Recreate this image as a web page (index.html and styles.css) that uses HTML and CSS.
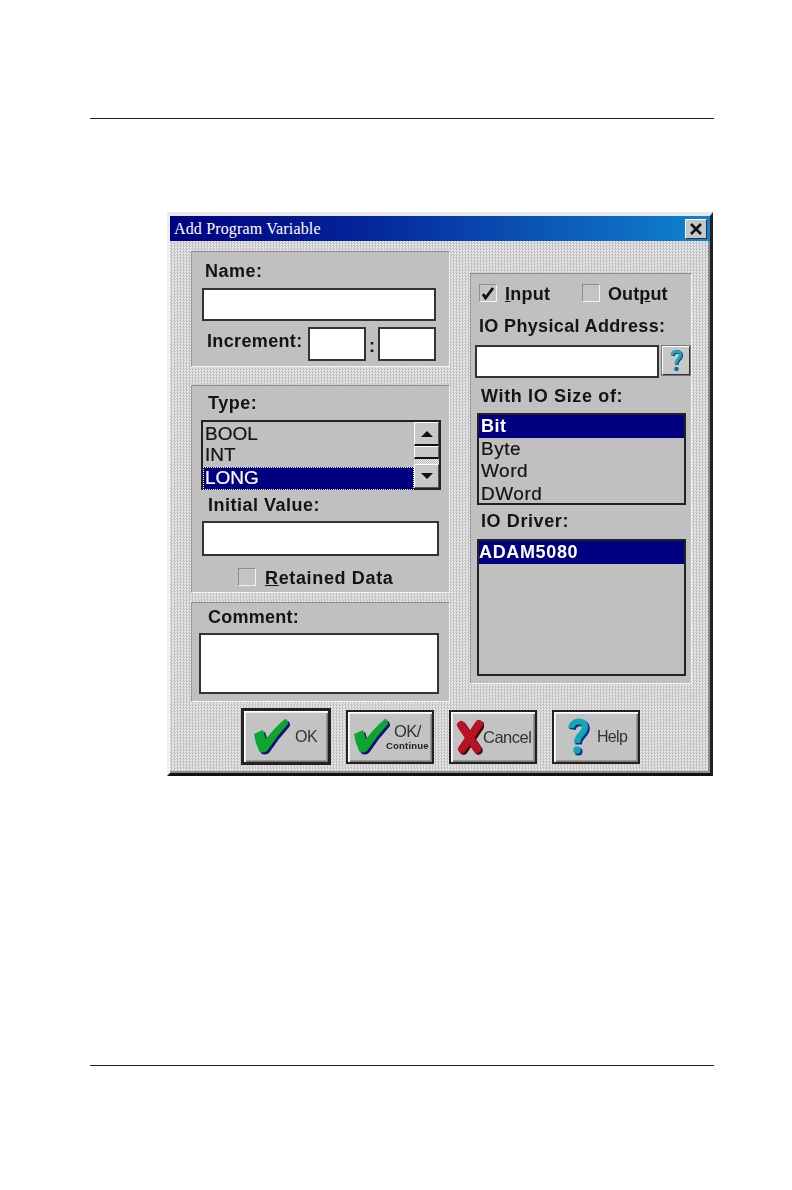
FILE: index.html
```html
<!DOCTYPE html>
<html lang="en">
<head>
<meta charset="utf-8">
<title>Add Program Variable</title>
<link rel="stylesheet" href="styles.css">
</head>
<body>
<div class="page">
  <hr class="rule rule-top">
  <section class="dialog">
    <header class="titlebar">
      <span class="title">Add Program Variable</span>
      <span class="close"><svg width="14" height="12" viewBox="0 0 14 12"><path d="M2 1 L12 11 M12 1 L2 11" stroke="#111" stroke-width="2.6" fill="none"/></svg></span>
    </header>
    <div class="main">
      <div class="left">
        <div class="panel panel-name">
          <div class="label label-name">Name:</div>
          <div class="field field-name"></div>
          <div class="inc-row">
            <span class="label">Increment:</span>
            <span class="field field-inc"></span>
            <span class="label colon">:</span>
            <span class="field field-inc"></span>
          </div>
        </div>
        <div class="panel panel-type">
          <div class="label label-type">Type:</div>
          <div class="listbox">
            <div class="rows">
              <div class="row row-first">BOOL</div>
              <div class="row">INT</div>
              <div class="row row-focus">LONG</div>
            </div>
            <div class="scroll">
              <span class="sbtn sbtn-up"><i class="arrow-up"></i></span>
              <span class="thumb"></span>
              <span class="track"></span>
              <span class="sbtn sbtn-down"><i class="arrow-down"></i></span>
            </div>
          </div>
          <div class="label label-init">Initial Value:</div>
          <div class="field field-init"></div>
          <div class="retain">
            <span class="check"></span>
            <span class="label"><u>R</u>etained Data</span>
          </div>
        </div>
        <div class="panel panel-comment">
          <div class="label label-comment">Comment:</div>
          <div class="field field-comment"></div>
        </div>
      </div>
      <div class="panel right">
        <div class="io-row">
          <span class="check"><svg width="14" height="14" viewBox="0 0 14 14"><path d="M2 8 L4.500 12 L12 2" stroke="#111" stroke-width="2.800" fill="none"/></svg></span>
          <span class="label io-input"><u>I</u>nput</span>
          <span class="check check-out"></span>
          <span class="label io-output">Out<u>p</u>ut</span>
        </div>
        <div class="label label-addr">IO Physical Address:</div>
        <div class="addr-row">
          <span class="field field-addr"></span>
          <span class="qbtn"><svg width="14" height="24" viewBox="0 0 14 24"><path d="M3 6 C4 1 12 1 11.500 6 C11 10 7 10 7 15" stroke="#0b3f78" stroke-width="3.500" fill="none" transform="translate(.8 .8)"/><path d="M3 6 C4 1 12 1 11.500 6 C11 10 7 10 7 15" stroke="#1fa6b8" stroke-width="3" fill="none"/><circle cx="7.500" cy="20" r="2.300" fill="#1b6f98"/></svg></span>
        </div>
        <div class="label label-size">With IO Size of:</div>
        <div class="plainlist list-size">
          <div class="item item-on">Bit</div>
          <div class="item">Byte</div>
          <div class="item">Word</div>
          <div class="item">DWord</div>
        </div>
        <div class="label label-driver">IO Driver:</div>
        <div class="plainlist list-driver">
          <div class="item item-on item-driver">ADAM5080</div>
        </div>
      </div>
    </div>
    <div class="buttons">
      <button class="btn btn-default">
        <svg class="ico-check" width="38" height="38" viewBox="0 0 38 38"><path d="M1 16 L10 12 L13 21 Q22 9 32 1 Q35 1 35 6 Q23 19 14 33 Q9 36 6 33 Q2 24 1 16Z" fill="#10107a" transform="translate(2 2)"/><path d="M1 16 L10 12 L13 21 Q22 9 32 1 Q35 1 35 6 Q23 19 14 33 Q9 36 6 33 Q2 24 1 16Z" fill="#0ea52e"/></svg>
        <span class="cap cap-ok">OK</span>
      </button>
      <button class="btn btn-cont">
        <svg class="ico-check" width="38" height="38" viewBox="0 0 38 38"><path d="M1 16 L10 12 L13 21 Q22 9 32 1 Q35 1 35 6 Q23 19 14 33 Q9 36 6 33 Q2 24 1 16Z" fill="#10107a" transform="translate(2 2)"/><path d="M1 16 L10 12 L13 21 Q22 9 32 1 Q35 1 35 6 Q23 19 14 33 Q9 36 6 33 Q2 24 1 16Z" fill="#0ea52e"/></svg>
        <span class="cap-stack"><span class="cap cap-slash">OK/</span><span class="cap-small">Continue</span></span>
      </button>
      <button class="btn btn-cancel">
        <svg class="ico-x" width="28" height="36" viewBox="0 0 28 36"><path d="M5 6 L21 30 M23 5 L6 30" stroke="#3d0a0a" stroke-width="8.500" stroke-linecap="round" fill="none" transform="translate(1.500 1.500)"/><path d="M5 6 L21 30 M23 5 L6 30" stroke="#b81226" stroke-width="8" stroke-linecap="round" fill="none"/></svg>
        <span class="cap">Cancel</span>
      </button>
      <button class="btn btn-help">
        <svg class="ico-q" width="26" height="38" viewBox="0 0 26 38"><g transform="translate(1.500 1.500)" stroke="#0b2f8a" fill="none"><path d="M5 10 C6 2 19 1 19 9 C19 16 11 16 11 25" stroke-width="6.500"/></g><circle cx="12.500" cy="33.500" r="4" fill="#0b2f8a"/><path d="M5 10 C6 2 19 1 19 9 C19 16 11 16 11 25" stroke="#11a7b4" stroke-width="6" fill="none"/><circle cx="11" cy="32" r="3.800" fill="#11a7b4"/></svg>
        <span class="cap">Help</span>
      </button>
    </div>
  </section>
  <hr class="rule rule-bottom">
</div>
</body>
</html>
```
FILE: styles.css
```css
* { box-sizing: border-box; }
html, body { margin: 0; padding: 0; background: #fff; }
body { font-family: "Liberation Sans", Arial, sans-serif; color: #141414; }
.page { width: 792px; height: 1190px; padding: 118px 78px 0 90px; overflow: hidden; }
.rule { margin: 0; border: 0; height: 1px; background: #222; width: 624px; }
.rule-bottom { margin-top: 289px; }
.dialog {
  width: 546px; height: 564px; margin: 93px 0 0 77px;
  border-style: solid; border-width: 4px 3px 3px 3px;
  border-color: #e8e8e8 #222 #111 #f0f0f0;
  background: repeating-conic-gradient(#c4c4c4 0 25%, #e8e8e8 0 50%) 0 0 / 3px 3px;
  box-shadow: inset -2px -2px 0 #8c8c8c;
  filter: blur(.35px);
}
.titlebar {
  height: 25px; padding: 0 3px 0 4px;
  display: flex; align-items: center; justify-content: space-between;
  background: linear-gradient(90deg, #000080 0%, #04249a 35%, #1084d0 100%);
}
.title { font-family: "Liberation Serif", serif; font-size: 16px; letter-spacing: .15px; color: #fff; }
.close {
  width: 22px; height: 20px; display: flex; align-items: center; justify-content: center;
  background: #c6c6c6; border: 1px solid; border-color: #fff #333 #333 #fff;
}
.main { display: flex; align-items: flex-start; gap: 20px; padding: 10px 0 0 21px; }
.left { display: flex; flex-direction: column; width: 259px; }
.panel {
  background: #c0c0c0; border: 1px solid; border-color: #8a8a8a #f4f4f4 #f4f4f4 #9a9a9a;
}
.label { font-weight: 700; font-size: 18px; line-height: 20px; letter-spacing: .5px; white-space: nowrap; }
.field { display: block; background: #fff; border: 2px solid #333; }

.panel-name { height: 116px; padding: 2px 0 0 10px; }
.label-name { margin: 7px 0 0 3px; }
.field-name { width: 234px; height: 33px; margin-top: 7px; }
.inc-row { display: flex; align-items: flex-start; margin-top: 6px; height: 34px; }
.inc-row > .label:first-child { margin: 4px 0 0 5px; width: 101px; letter-spacing: .35px; }
.field-inc { width: 58px; height: 34px; }
.colon { width: 12px; text-align: center; letter-spacing: 0; padding-top: 9px; }

.panel-type { height: 208px; margin-top: 18px; padding: 0 0 0 9px; }
.label-type { margin: 7px 0 0 7px; }
.listbox {
  display: flex; width: 240px; height: 70px; margin-top: 7px;
  border: 2px solid #222; background: #c0c0c0;
}
.rows { width: 213px; }
.row { height: 22.500px; line-height: 20px; font-size: 19px; letter-spacing: 0; padding-left: 2px; -webkit-text-stroke: .2px #141414; }
.row-first { line-height: 23px; }
.row-focus { line-height: 22px; background: #000080; color: #fff; outline: 1px dotted #fff; outline-offset: -1px; -webkit-text-stroke: .2px #fff; }
.scroll { width: 25px; display: flex; flex-direction: column; }
.sbtn {
  display: flex; align-items: center; justify-content: center;
  background: #c8c8c8; border: 1px solid; border-color: #fff #555 #555 #fff;
}
.sbtn-up { height: 24px; border-bottom: 2px solid #111; }
.sbtn-down { height: 24px; }
.thumb { height: 13px; background: #c8c8c8; border: 1px solid; border-color: #fff #666 #111 #fff; border-bottom-width: 2px; }
.track { height: 5px; background: repeating-conic-gradient(#bbb 0 25%, #eee 0 50%) 0 0 / 2px 2px; }
.arrow-up { width: 0; height: 0; border: 6px solid transparent; border-top: 0; border-bottom: 6px solid #111; }
.arrow-down { width: 0; height: 0; border: 6px solid transparent; border-bottom: 0; border-top: 6px solid #111; }
.label-init { margin: 5px 0 0 7px; }
.field-init { width: 237px; height: 35px; margin: 6px 0 0 1px; }
.retain { display: flex; align-items: center; gap: 9px; margin: 11px 0 0 37px; }
.retain .label { position: relative; top: 1px; letter-spacing: .65px; }
.check {
  display: flex; align-items: center; justify-content: center;
  width: 18px; height: 18px; flex: none; background: #c4c4c4;
  border: 1px solid; border-color: #8e8e8e #f2f2f2 #f2f2f2 #8e8e8e;
}

.panel-comment { height: 100px; margin-top: 9px; padding-left: 7px; }
.label-comment { margin: 4px 0 0 9px; letter-spacing: .25px; }
.field-comment { width: 240px; height: 61px; margin-top: 6px; }

.right { width: 222px; height: 411px; margin-top: 22px; padding: 10px 0 0 4px; }
.io-row { display: flex; align-items: center; height: 18px; padding-left: 4px; }
.io-input { margin: 2px 0 0 8px; width: 77px; letter-spacing: .25px; }
.io-output { margin: 2px 0 0 8px; letter-spacing: .1px; }
.label-addr { margin: 14px 0 0 4px; letter-spacing: .35px; }
.addr-row { display: flex; align-items: flex-start; gap: 3px; margin-top: 9px; }
.field-addr { width: 184px; height: 33px; }
.qbtn {
  display: flex; align-items: center; justify-content: center;
  width: 28px; height: 29px; margin-top: 1px; background: #c8c8c8;
  border: 1px solid; border-color: #fff #333 #333 #fff; outline: 1px solid #777;
}
.label-size { margin: 8px 0 0 6px; letter-spacing: .65px; }
.plainlist { margin-left: 2px; width: 209px; background: #c0c0c0; border: 2px solid #222; }
.list-size { height: 92px; margin-top: 7px; }
.list-driver { height: 137px; margin-top: 8px; }
.item { height: 22.500px; line-height: 22px; font-size: 19px; letter-spacing: .5px; padding-left: 2px; -webkit-text-stroke: .2px #141414; }
.item-on { background: #000080; color: #fff; font-weight: 700; font-size: 18px; -webkit-text-stroke: 0; }
.item-driver { padding-left: 0; letter-spacing: .65px; }
.label-driver { margin: 6px 0 0 6px; letter-spacing: .6px; }

.buttons { display: flex; align-items: center; gap: 15px; margin-top: 6px; padding-left: 71px; height: 57px; }
.btn {
  display: flex; align-items: center; padding: 0 0 0 4px; margin: 0;
  width: 88px; height: 54px; background: #c3c3c3; color: #222;
  border: 2px solid #222; box-shadow: inset 1px 1px 0 #fff, inset 2px 2px 0 #eee, inset -1px -1px 0 #777, inset -2px -2px 0 #999;
  font-family: "Liberation Sans", Arial, sans-serif;
}
.btn-default { width: 90px; height: 57px; border-width: 3px; padding-left: 9px; }
.btn-cont { padding-left: 5px; }
.btn-cancel { padding-left: 5px; }
.btn-help { padding-left: 12px; }
.ico-check, .ico-x, .ico-q { flex: none; }
.cap { font-size: 16.500px; letter-spacing: -.5px; line-height: 18px; font-weight: 400; color: #333; }
.cap-ok { margin-left: 4px; font-size: 16px; }
.btn-cancel .cap { margin-left: -1px; }
.btn-help .cap { margin-left: 5px; font-size: 16px; letter-spacing: -.7px; }
.cap-stack { display: flex; flex-direction: column; align-items: center; margin-left: -5px; }
.cap-slash { line-height: 17px; }
.cap-small { font-size: 9.500px; font-weight: 700; line-height: 11px; letter-spacing: .2px; white-space: nowrap; }
```
